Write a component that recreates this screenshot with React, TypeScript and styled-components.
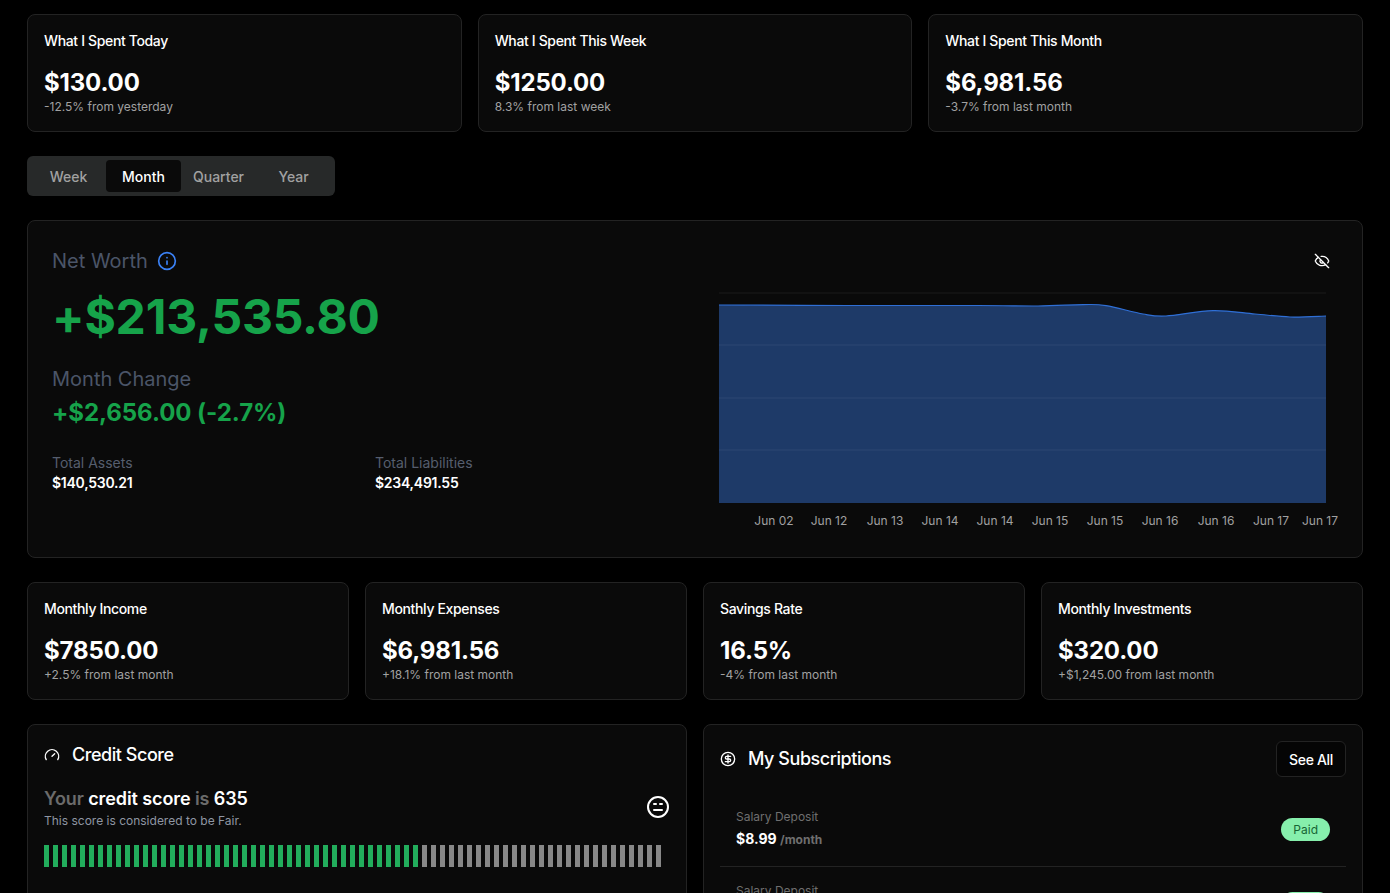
import React from 'react';
import styled, {createGlobalStyle} from 'styled-components';
import {Annoyed, CircleDollarSign, EyeOff, Gauge, Info} from 'lucide-react';

const GlobalStyle = createGlobalStyle`
  html, body {
    margin: 0;
    height: 100%;
    overflow: hidden;
    background: #000;
  }
  * {
    box-sizing: border-box;
  }
`;

const Page = styled.div`
  display: flex;
  flex-direction: column;
  gap: 24px;
  padding: 14px 27px;
  background: #000;
  color: #fff;
  font-family: Inter, 'Liberation Sans', sans-serif;
`;
const Row = styled.div<{cols: number}>`
  display: grid;
  grid-template-columns: repeat(${props => props.cols}, 1fr);
  gap: 16px;
`;
const Card = styled.div`
  background: #0a0a0a;
  border: 1px solid #232323;
  border-radius: 8px;
  padding: 16px;
`;
const StatTitle = styled.div`
  font-size: 14px;
  line-height: 20px;
  font-weight: 500;
  letter-spacing: -0.35px;
  margin-bottom: 16px;
`;
const StatValue = styled.div`
  font-size: 24px;
  line-height: 32px;
  font-weight: 700;
  letter-spacing: -0.15px;
`;
const StatNote = styled.div`
  font-size: 12px;
  line-height: 16px;
  color: #a1a1a1;
`;

const Tabs = styled.div`
  display: flex;
  align-self: flex-start;
  padding: 4px;
  border-radius: 6px;
  background: #272929;
`;
const Tab = styled.div<{active?: boolean}>`
  width: 75px;
  height: 32px;
  display: flex;
  align-items: center;
  justify-content: center;
  border-radius: 4px;
  font-size: 14px;
  font-weight: 500;
  color: ${props => props.active ? '#fff' : '#a1a1a1'};
  background: ${props => props.active ? '#0a0a0a' : 'transparent'};
`;

const WorthCard = styled(Card)`
  display: grid;
  grid-template-columns: 646px 1fr;
  height: 338px;
  padding: 24px;
`;
const WorthLeft = styled.div`
  display: flex;
  flex-direction: column;
  padding-top: 2px;
`;
const WorthLabel = styled.div`
  display: flex;
  align-items: center;
  gap: 9px;
  font-size: 20px;
  line-height: 28px;
  color: #4b5568;
  svg {
    color: #3b82f6;
  }
`;
const WorthValue = styled.div`
  margin-top: 18px;
  font-size: 48px;
  line-height: 48px;
  font-weight: 700;
  letter-spacing: -0.2px;
  color: #16a34a;
`;
const ChangeLabel = styled(WorthLabel)`
  margin-top: 24px;
`;
const ChangeValue = styled.div`
  margin-top: 4px;
  font-size: 24px;
  line-height: 32px;
  font-weight: 700;
  letter-spacing: -0.05px;
  color: #16a34a;
`;
const Totals = styled.div`
  display: grid;
  grid-template-columns: 1fr 1fr;
  margin-top: 24px;
`;
const TotalLabel = styled.div`
  font-size: 14px;
  line-height: 20px;
  color: #565e6e;
`;
const TotalValue = styled.div`
  font-size: 14px;
  line-height: 20px;
  font-weight: 600;
  letter-spacing: -0.25px;
`;
const ChartColumn = styled.div`
  display: flex;
  flex-direction: column;
`;
const ChartTools = styled.div`
  display: flex;
  justify-content: flex-end;
  height: 40px;
  padding: 8px 8px 0 0;
`;
const AxisLabel = styled.text`
  font-size: 12px;
  fill: #a1a1a1;
  text-anchor: middle;
`;

const PanelTitle = styled.div`
  display: flex;
  align-items: center;
  gap: 12px;
  font-size: 18px;
  line-height: 28px;
  font-weight: 500;
  letter-spacing: -0.45px;
`;
const ScoreHead = styled.div`
  display: flex;
  justify-content: space-between;
  align-items: center;
  margin: 16px 0;
`;
const ScoreLine = styled.div`
  font-size: 18px;
  line-height: 28px;
  font-weight: 600;
  letter-spacing: -0.1px;
  color: #6b6b6b;
  b {
    font-weight: 600;
    color: #fff;
  }
`;
const ScoreNote = styled.div`
  font-size: 12px;
  line-height: 16px;
  color: #8f96a3;
`;
const Bars = styled.div`
  display: flex;
  gap: 4px;
  margin-bottom: 60px;
`;
const Bar = styled.div<{on: boolean}>`
  width: 5px;
  height: 22px;
  background: ${props => props.on ? '#22ad5c' : '#888'};
`;
const PanelHead = styled.div`
  display: flex;
  justify-content: space-between;
  align-items: center;
  margin-bottom: 16px;
`;
const SeeAll = styled.button`
  width: 70px;
  height: 36px;
  border: 1px solid #232323;
  border-radius: 6px;
  background: #050505;
  color: #fff;
  font-family: inherit;
  font-size: 14px;
  font-weight: 500;
  letter-spacing: -0.35px;
`;
const SubRow = styled.div`
  display: flex;
  justify-content: space-between;
  align-items: center;
  padding: 16px;
  border-bottom: 1px solid #232323;
`;
const SubName = styled.div`
  font-size: 12px;
  line-height: 16px;
  margin-bottom: 4px;
  color: #6f6f6f;
`;
const SubPrice = styled.div`
  font-size: 14px;
  line-height: 20px;
  font-weight: 700;
  span {
    font-size: 12px;
    color: #6f6f6f;
  }
`;
const Badge = styled.div`
  padding: 3px 12px;
  border-radius: 999px;
  font-size: 12px;
  line-height: 17px;
  background: #86efac;
  color: #166534;
`;

const topStats = [
  {title: 'What I Spent Today', value: '$130.00', note: '-12.5% from yesterday'},
  {title: 'What I Spent This Week', value: '$1250.00', note: '8.3% from last week'},
  {title: 'What I Spent This Month', value: '$6,981.56', note: '-3.7% from last month'},
];
const monthStats = [
  {title: 'Monthly Income', value: '$7850.00', note: '+2.5% from last month'},
  {title: 'Monthly Expenses', value: '$6,981.56', note: '+18.1% from last month'},
  {title: 'Savings Rate', value: '16.5%', note: '-4% from last month'},
  {title: 'Monthly Investments', value: '$320.00', note: '+$1,245.00 from last month'},
];
const tabs = ['Week', 'Month', 'Quarter', 'Year'];
const axis: [string, number][] = [
  ['Jun 02', 76], ['Jun 12', 131], ['Jun 13', 187], ['Jun 14', 242],
  ['Jun 14', 297], ['Jun 15', 352], ['Jun 15', 407], ['Jun 16', 462],
  ['Jun 16', 518], ['Jun 17', 573], ['Jun 17', 622],
];
// chart coordinates, origin at the top left of the svg
const curve: [number, number][] = [
  [21, 20], [150, 20.5], [280, 20.5], [340, 21], [385, 19.6], [408, 20.6],
  [445, 29], [468, 31], [515, 25.6], [557, 29], [592, 32], [628, 31],
];
const CHART_FLOOR = 218;

const smoothLine = (points: [number, number][]) => {
  let d = `M${points[0][0]},${points[0][1]}`;
  for (let i = 0; i < points.length - 1; i++) {
    const p0 = points[Math.max(i - 1, 0)];
    const p1 = points[i];
    const p2 = points[i + 1];
    const p3 = points[Math.min(i + 2, points.length - 1)];
    const c1x = p1[0] + (p2[0] - p0[0]) / 6;
    const c1y = p1[1] + (p2[1] - p0[1]) / 6;
    const c2x = p2[0] - (p3[0] - p1[0]) / 6;
    const c2y = p2[1] - (p3[1] - p1[1]) / 6;
    d += ` C${c1x},${c1y} ${c2x},${c2y} ${p2[0]},${p2[1]}`;
  }
  return d;
};

type StatProps = {
  title: string,
  value: string,
  note: string,
};

const Stat: React.FC<StatProps> = ({title, value, note}) => (
  <Card>
    <StatTitle>{title}</StatTitle>
    <StatValue>{value}</StatValue>
    <StatNote>{note}</StatNote>
  </Card>
);

const Subscription = () => (
  <SubRow>
    <div>
      <SubName>Salary Deposit</SubName>
      <SubPrice>$8.99 <span>/month</span></SubPrice>
    </div>
    <Badge>Paid</Badge>
  </SubRow>
);

const WorthChart = () => {
  const line = smoothLine(curve);
  return (
    <svg width="640" height="250" viewBox="0 0 640 250">
      <path d={`${line} L628,${CHART_FLOOR} L21,${CHART_FLOOR} Z`} fill="#1e3a68"/>
      {[8, 60, 113, 165].map(y => (
        <line key={y} x1="21" x2="628" y1={y} y2={y} stroke="#ffffff" strokeOpacity="0.07"/>
      ))}
      <path d={line} fill="none" stroke="#2f6fd6" strokeWidth="1.2"/>
      {axis.map(([label, x]) => (
        <AxisLabel key={x} x={x} y={240}>{label}</AxisLabel>
      ))}
    </svg>
  );
};

const App = () => (
  <Page>
    <GlobalStyle/>
    <Row cols={3}>
      {topStats.map(stat => <Stat key={stat.title} {...stat}/>)}
    </Row>
    <Tabs>
      {tabs.map(tab => <Tab key={tab} active={tab === 'Month'}>{tab}</Tab>)}
    </Tabs>
    <WorthCard>
      <WorthLeft>
        <WorthLabel>Net Worth <Info size={20}/></WorthLabel>
        <WorthValue>+$213,535.80</WorthValue>
        <ChangeLabel>Month Change</ChangeLabel>
        <ChangeValue>+$2,656.00 (-2.7%)</ChangeValue>
        <Totals>
          <div>
            <TotalLabel>Total Assets</TotalLabel>
            <TotalValue>$140,530.21</TotalValue>
          </div>
          <div>
            <TotalLabel>Total Liabilities</TotalLabel>
            <TotalValue>$234,491.55</TotalValue>
          </div>
        </Totals>
      </WorthLeft>
      <ChartColumn>
        <ChartTools><EyeOff size={16}/></ChartTools>
        <WorthChart/>
      </ChartColumn>
    </WorthCard>
    <Row cols={4}>
      {monthStats.map(stat => <Stat key={stat.title} {...stat}/>)}
    </Row>
    <Row cols={2}>
      <Card>
        <PanelTitle><Gauge size={16}/>Credit Score</PanelTitle>
        <ScoreHead>
          <div>
            <ScoreLine>Your <b>credit score</b> is <b>635</b></ScoreLine>
            <ScoreNote>This score is considered to be Fair.</ScoreNote>
          </div>
          <Annoyed size={24}/>
        </ScoreHead>
        <Bars>
          {Array.from({length: 69}, (_, i) => <Bar key={i} on={i < 42}/>)}
        </Bars>
      </Card>
      <Card>
        <PanelHead>
          <PanelTitle>
            <CircleDollarSign size={16}/>My Subscriptions
          </PanelTitle>
          <SeeAll>See All</SeeAll>
        </PanelHead>
        <Subscription/>
        <Subscription/>
      </Card>
    </Row>
  </Page>
);

export default App;
